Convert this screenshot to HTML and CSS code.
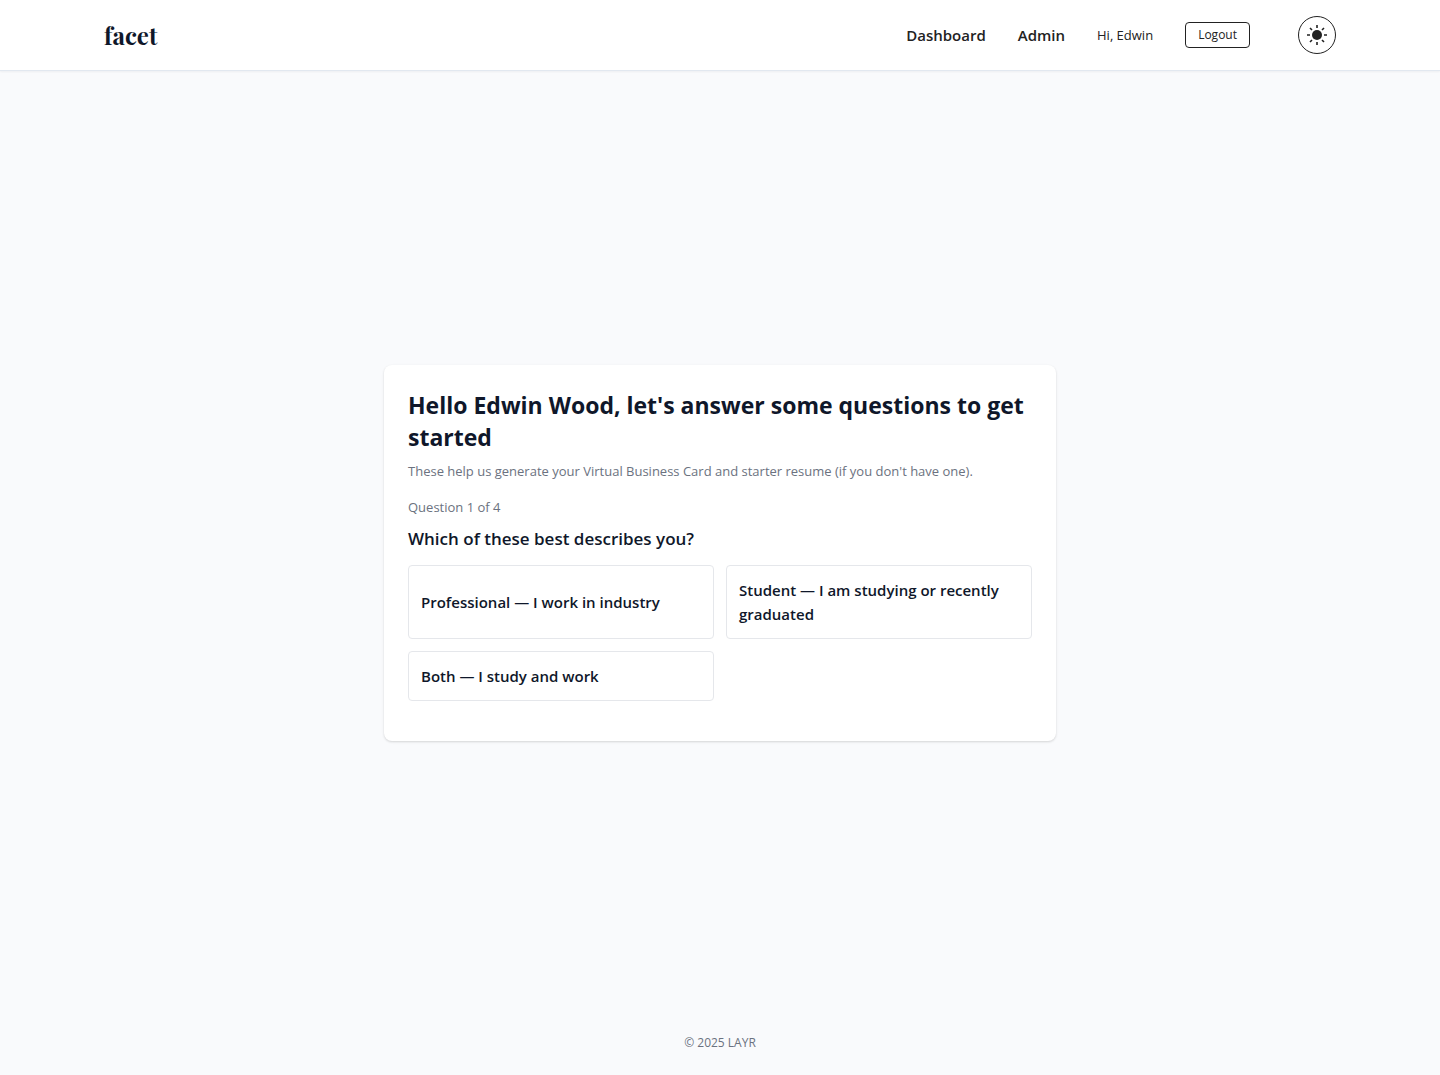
FILE: index.html
```html
<!DOCTYPE html>
<html lang="en">
<head>
<meta charset="utf-8">
<meta name="viewport" content="width=device-width, initial-scale=1">
<title>facet</title>
<link rel="stylesheet" href="styles.css">
</head>
<body>
<header class="site-header">
  <div class="header-inner">
    <a class="logo" href="#">facet</a>
    <nav class="nav">
      <a class="nav-link" href="#">Dashboard</a>
      <a class="nav-link" href="#">Admin</a>
      <span class="greeting">Hi, Edwin</span>
      <button class="logout" type="button">Logout</button>
      <button class="theme-toggle" type="button" aria-label="Toggle theme">
        <svg class="sun" viewBox="0 0 20 20" aria-hidden="true">
          <circle cx="10" cy="10" r="5" fill="currentColor"/>
          <path d="M10 0v3M10 17v3M0 10h3M17 10h3M3 3l2 2M15 15l2 2M17 3l-2 2M5 15l-2 2" fill="none" stroke="currentColor" stroke-width="1.6"/>
        </svg>
      </button>
    </nav>
  </div>
</header>
<main class="main">
  <section class="card">
    <h1 class="title">Hello Edwin Wood, let's answer some questions to get started</h1>
    <p class="intro">These help us generate your Virtual Business Card and starter resume (if you don't have one).</p>
    <p class="progress">Question 1 of 4</p>
    <h2 class="question">Which of these best describes you?</h2>
    <div class="options">
      <button class="option" type="button">Professional — I work in industry</button>
      <button class="option" type="button">Student — I am studying or recently graduated</button>
      <button class="option" type="button">Both — I study and work</button>
    </div>
  </section>
</main>
<footer class="site-footer">© 2025 LAYR</footer>
</body>
</html>
```
FILE: styles.css
```css
*, *::before, *::after { box-sizing: border-box; }

body {
  margin: 0;
  min-height: 100vh;
  display: flex;
  flex-direction: column;
  background: #f9fafc;
  color: #0f172a;
  font-family: "Segoe UI", "Open Sans", "Noto Sans", sans-serif;
  font-size: 15px;
  line-height: 24px;
}

h1, h2, p { margin: 0; }

button {
  font: inherit;
  color: inherit;
  cursor: pointer;
}

.site-header {
  background: #fff;
  border-bottom: 1px solid #e2e8f0;
  box-shadow: 0 1px 2px rgba(15, 23, 42, 0.05);
}

.header-inner {
  max-width: 1280px;
  margin: 0 auto;
  padding: 16px 24px;
  display: flex;
  align-items: center;
  justify-content: space-between;
}

.logo {
  color: #0f172a;
  font-family: "Playfair Display", "Liberation Serif", serif;
  font-size: 24px;
  font-weight: 700;
  line-height: 32px;
  text-decoration: none;
}

.nav {
  display: flex;
  align-items: center;
  gap: 32px;
  color: #222;
}

.nav-link {
  color: inherit;
  font-weight: 600;
  text-decoration: none;
}

.greeting {
  font-size: 13px;
  line-height: 20px;
}

.logout {
  padding: 4px 12px;
  border: 1px solid #222;
  border-radius: 4px;
  background: transparent;
  font-size: 12px;
  line-height: 16px;
}

.theme-toggle {
  width: 38px;
  height: 38px;
  margin-left: 16px;
  padding: 0;
  display: flex;
  align-items: center;
  justify-content: center;
  border: 1px solid #222;
  border-radius: 50%;
  background: transparent;
}

.sun {
  width: 20px;
  height: 20px;
}

.main {
  flex: 1;
  display: flex;
  align-items: center;
  justify-content: center;
}

.card {
  width: 100%;
  max-width: 672px;
  padding: 24px 24px 40px;
  border-radius: 8px;
  background: #fff;
  box-shadow: 0 1px 3px rgba(0, 0, 0, 0.1), 0 1px 2px rgba(0, 0, 0, 0.06);
}

.title {
  font-size: 23px;
  font-weight: 700;
  line-height: 32px;
}

.intro, .progress {
  color: #6b7280;
  font-size: 13px;
  line-height: 20px;
}

.intro { margin-top: 8px; }

.progress { margin-top: 16px; }

.question {
  margin-top: 8px;
  font-size: 17px;
  font-weight: 600;
  line-height: 28px;
}

.options {
  margin-top: 12px;
  display: grid;
  grid-template-columns: repeat(2, 1fr);
  gap: 12px;
}

.option {
  padding: 12px;
  border: 1px solid #e5e7eb;
  border-radius: 4px;
  background: #fff;
  font-weight: 600;
  text-align: left;
}

.site-footer {
  padding-bottom: 24px;
  color: #6b7280;
  font-size: 12px;
  line-height: 16px;
  text-align: center;
}
```
